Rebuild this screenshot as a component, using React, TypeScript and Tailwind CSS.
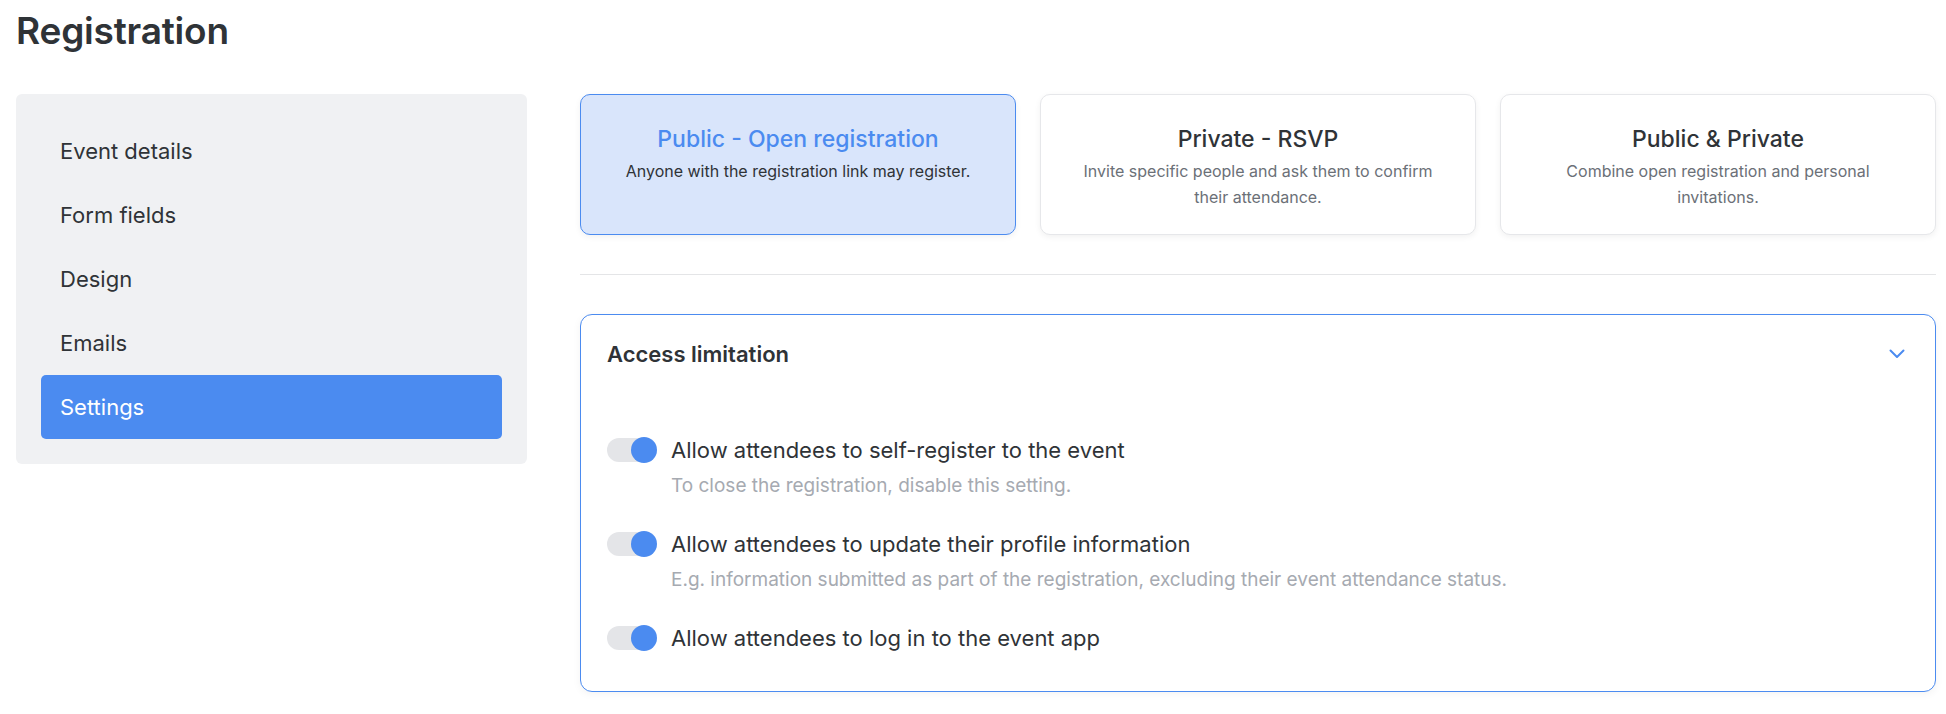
import React from 'react';

const menu = ['Event details', 'Form fields', 'Design', 'Emails', 'Settings'];

const types = [
  { title: 'Public - Open registration', desc: 'Anyone with the registration link may register.', active: true },
  { title: 'Private - RSVP', desc: 'Invite specific people and ask them to confirm their attendance.', active: false },
  { title: 'Public & Private', desc: 'Combine open registration and personal invitations.', active: false },
];

const settings = [
  { label: 'Allow attendees to self-register to the event', hint: 'To close the registration, disable this setting.' },
  {
    label: 'Allow attendees to update their profile information',
    hint: 'E.g. information submitted as part of the registration, excluding their event attendance status.',
  },
  { label: 'Allow attendees to log in to the event app', hint: '' },
];

const Toggle: React.FC = () => (
  <div className="relative h-8 w-[50px] flex-shrink-0 flex items-center">
    <div className="h-[24px] w-[46px] rounded-full bg-[#e4e5e8]" />
    <div className="absolute right-0 top-[3px] h-[26px] w-[26px] rounded-full bg-[#4b8bf0]" />
  </div>
);

export default function App() {
  return (
    <div
      className="min-h-screen bg-white pl-4 pr-[10px] pt-[8px] text-[#2f3337]"
      style={{ fontFamily: 'Inter, "Noto Sans", sans-serif' }}
    >
      <h1 className="text-[37px] leading-[46px] font-semibold tracking-[-0.2px]">Registration</h1>

      <div className="mt-[40px] flex items-start gap-[53px]">
        {/* Sidebar */}
        <div className="w-[511px] flex-shrink-0 rounded-md bg-[#f0f1f3] p-[25px]">
          {menu.map((item) => (
            <div
              key={item}
              className={`h-16 flex items-center rounded-[5px] pl-[19px] text-[22px] ${
                item === 'Settings' ? 'bg-[#4b8bf0] text-white' : 'text-[#2f3337]'
              }`}
            >
              {item}
            </div>
          ))}
        </div>

        {/* Content */}
        <div className="flex-1">
          <div className="grid grid-cols-3 gap-6">
            {types.map((t) => (
              <div
                key={t.title}
                className={`h-[141px] rounded-[10px] border px-10 pt-[30px] text-center shadow-[0_2px_6px_rgba(0,0,0,0.06)] ${
                  t.active ? 'border-[#4b8bf0] bg-[#d9e5fb]' : 'border-[#e6e7ea] bg-white'
                }`}
              >
                <div
                  className={`text-[23px] leading-7 font-medium ${t.active ? 'text-[#4b8bf0]' : 'text-[#2f3337]'}`}
                >
                  {t.title}
                </div>
                <div
                  className={`mt-[5px] text-[16px] leading-[26px] ${t.active ? 'text-[#2f3337]' : 'text-[#6b7077]'}`}
                >
                  {t.desc}
                </div>
              </div>
            ))}
          </div>

          <div className="mt-[39px] border-t border-[#e4e5e7]" />

          {/* Access limitation */}
          <div className="mt-[39px] rounded-[12px] border border-[#4b8bf0] bg-white shadow-[0_2px_8px_rgba(0,0,0,0.05)]">
            <div className="flex h-[78px] items-center justify-between pl-[26px] pr-[30px]">
              <span className="text-[22px] font-semibold">Access limitation</span>
              <svg width="16" height="10" viewBox="0 0 16 10" fill="none">
                <path d="M1.5 1.5 8 8l6.5-6.5" stroke="#4b8bf0" strokeWidth="2" strokeLinecap="round" strokeLinejoin="round" />
              </svg>
            </div>
            <div className="flex flex-col gap-[29px] px-[26px] pt-[41px] pb-[37px]">
              {settings.map((s) => (
                <div key={s.label} className="flex items-start gap-[14px]">
                  <Toggle />
                  <div>
                    <div className="text-[22px] leading-8">{s.label}</div>
                    {s.hint && <div className="mt-[7px] text-[19px] leading-[26px] text-[#a6aab1]">{s.hint}</div>}
                  </div>
                </div>
              ))}
            </div>
          </div>
        </div>
      </div>
    </div>
  );
}
